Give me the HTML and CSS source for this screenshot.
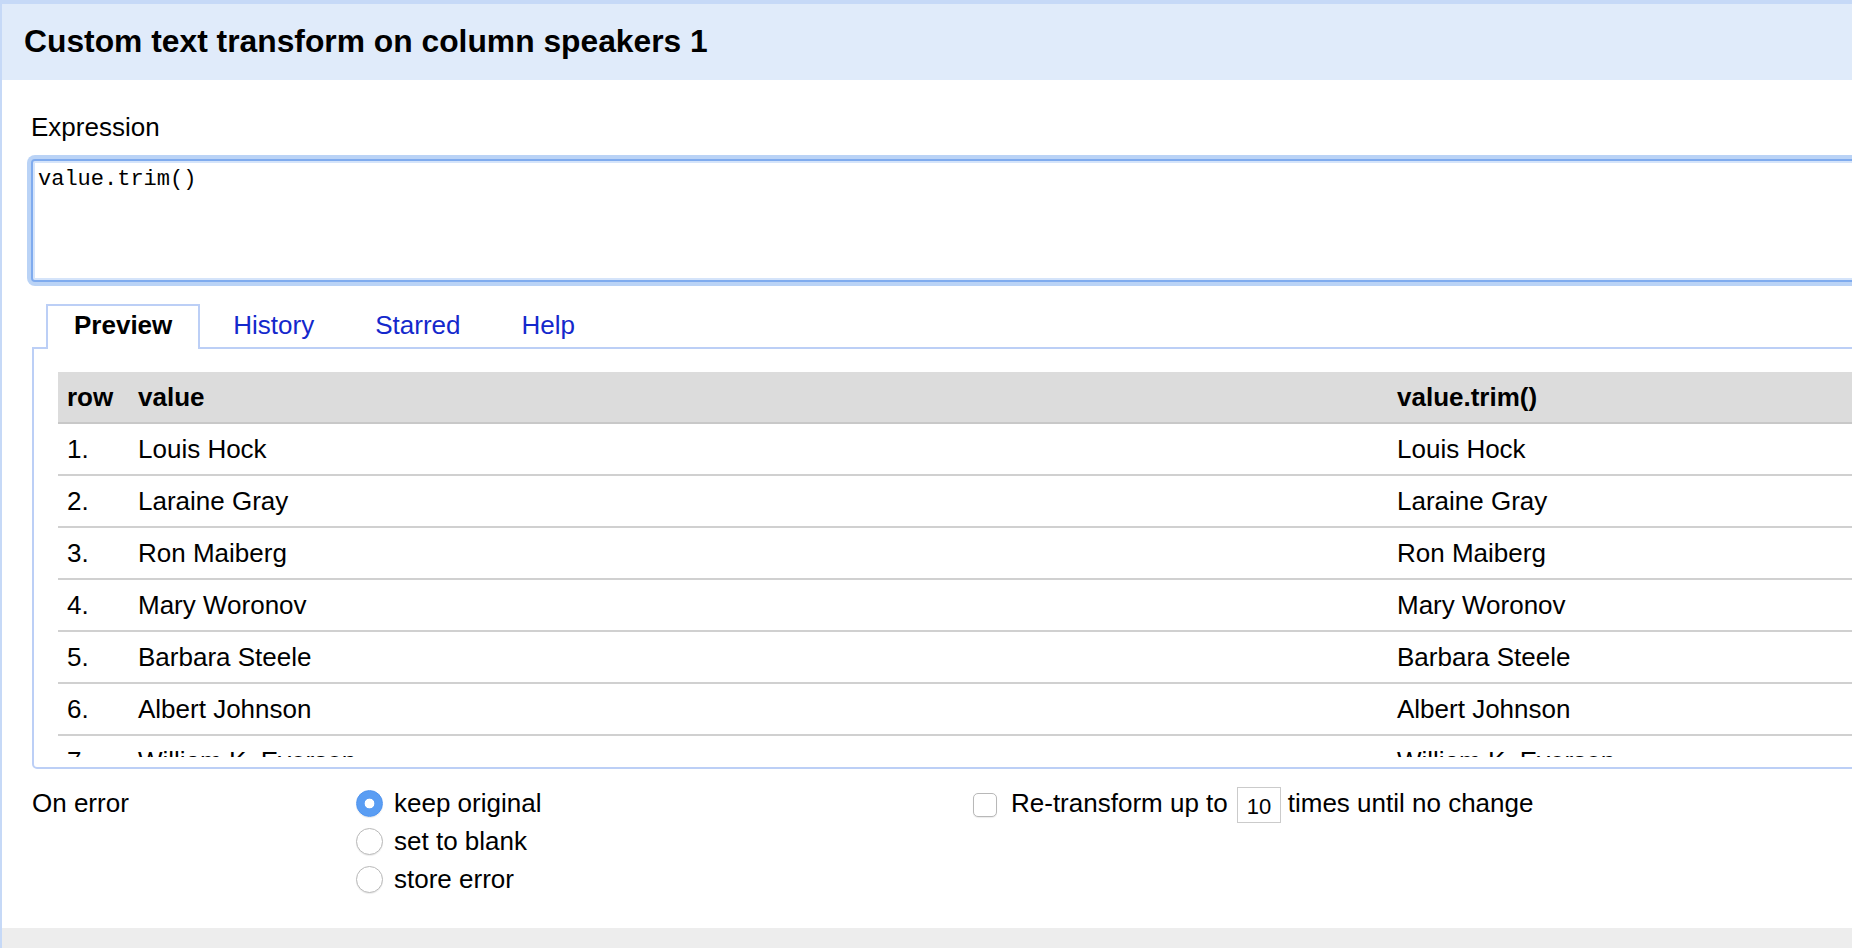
FILE: index.html
```html
<!DOCTYPE html>
<html lang="en">
<head>
<meta charset="utf-8">
<title>Custom text transform</title>
<link rel="stylesheet" href="styles.css">
</head>
<body>
<div class="dialog">
  <div class="dialog-header">Custom text transform on column speakers 1</div>
  <div class="dialog-body">
    <div class="field-label">Expression</div>
    <textarea class="expression" spellcheck="false">value.trim()</textarea>
    <div class="tabs">
      <div class="tab tab-active">Preview</div>
      <a class="tab" href="#">History</a>
      <a class="tab" href="#">Starred</a>
      <a class="tab" href="#">Help</a>
    </div>
    <div class="tab-panel">
      <div class="preview-scroll">
        <table class="preview-table">
          <colgroup>
            <col class="c-row">
            <col class="c-value">
            <col class="c-result">
          </colgroup>
          <thead>
            <tr><th>row</th><th>value</th><th>value.trim()</th></tr>
          </thead>
          <tbody>
            <tr><td>1.</td><td>Louis Hock</td><td>Louis Hock</td></tr>
            <tr><td>2.</td><td>Laraine Gray</td><td>Laraine Gray</td></tr>
            <tr><td>3.</td><td>Ron Maiberg</td><td>Ron Maiberg</td></tr>
            <tr><td>4.</td><td>Mary Woronov</td><td>Mary Woronov</td></tr>
            <tr><td>5.</td><td>Barbara Steele</td><td>Barbara Steele</td></tr>
            <tr><td>6.</td><td>Albert Johnson</td><td>Albert Johnson</td></tr>
            <tr><td>7.</td><td>William K. Everson</td><td>William K. Everson</td></tr>
          </tbody>
        </table>
      </div>
    </div>
    <div class="options">
      <div class="opt-label">On error</div>
      <div class="opt-radios">
        <label class="opt-row"><input class="radio" type="radio" name="onerror" checked><span>keep original</span></label>
        <label class="opt-row"><input class="radio" type="radio" name="onerror"><span>set to blank</span></label>
        <label class="opt-row"><input class="radio" type="radio" name="onerror"><span>store error</span></label>
      </div>
      <div class="opt-repeat">
        <div class="opt-row">
          <input class="checkbox" type="checkbox">
          <span>Re-transform up to</span>
          <input class="repeat-count" type="text" value="10">
          <span>times until no change</span>
        </div>
      </div>
    </div>
  </div>
  <div class="dialog-footer"></div>
</div>
</body>
</html>
```
FILE: styles.css
```css
html, body {
  margin: 0;
  padding: 0;
  overflow: hidden;
  background: #ffffff;
}

body {
  font-family: "Liberation Sans", Arial, Helvetica, sans-serif;
  font-size: 26px;
  color: #000000;
}

.dialog {
  width: 2000px;
  border-top: 4px solid #c6d9f7;
  border-left: 2px solid #c6d9f7;
}

.dialog-header {
  background: #e0ebfa;
  padding: 19px 22px 21px;
  font-size: 31.8px;
  font-weight: bold;
  line-height: 36px;
}

.dialog-body {
  padding: 32px 0 30px 29px;
}

.field-label {
  line-height: 30px;
}

.expression {
  display: block;
  box-sizing: border-box;
  margin: 17px 0 0;
  width: 1900px;
  height: 123px;
  padding: 6px 5px 4px;
  border: 2px solid #7fabee;
  border-radius: 4px;
  box-shadow: 0 0 0 4px #bad3f6, inset 0 0 0 2px #d5e4fa;
  font-family: "Liberation Mono", "Courier New", monospace;
  font-size: 22px;
  line-height: 26px;
  color: #000000;
  resize: none;
  outline: none;
}

.tabs {
  display: flex;
  height: 43px;
  margin: 22px 0 0 15px;
}

.tab {
  position: relative;
  z-index: 1;
  box-sizing: border-box;
  height: 45px;
  padding: 4px 26px 0;
  margin-right: 5px;
  border: 2px solid transparent;
  border-bottom: 0;
  line-height: 30px;
  color: #1428cc;
  text-decoration: none;
}

.tab-active {
  border-color: #bccff6;
  border-bottom: 0;
  background: #ffffff;
  color: #000000;
  font-weight: bold;
}

.tab-panel {
  margin-left: 1px;
  border: 2px solid #bccff6;
  border-radius: 0 0 5px 5px;
  padding: 23px 0 10px 24px;
}

.preview-scroll {
  height: 385px;
  overflow: hidden;
}

.preview-table {
  border-collapse: separate;
  border-spacing: 0;
  table-layout: fixed;
  width: 1900px;
}

.c-row { width: 71px; }
.c-value { width: 1259px; }

.preview-table th,
.preview-table td {
  padding: 10px 9px;
  line-height: 30px;
  text-align: left;
  white-space: nowrap;
  overflow: hidden;
}

.preview-table th {
  background: #dcdcdc;
  font-weight: bold;
  border-bottom: 2px solid #c8c8c8;
}

.preview-table td {
  border-bottom: 2px solid #d0d0d0;
}

.options {
  display: grid;
  grid-template-columns: 325px 617px auto;
  margin-top: 15px;
}

.opt-label {
  margin-left: 1px;
  line-height: 38px;
}

.opt-row {
  display: flex;
  align-items: center;
  height: 38px;
  line-height: 38px;
  white-space: nowrap;
}

.radio {
  appearance: none;
  -webkit-appearance: none;
  box-sizing: border-box;
  width: 27px;
  height: 27px;
  margin: 0 11px 0 0;
  border: 1px solid #b9b9b9;
  border-radius: 50%;
  background: #ffffff;
  box-shadow: 0 1px 1px rgba(0, 0, 0, 0.08);
}

.radio:checked {
  border-color: #4f93ee;
  background: radial-gradient(circle, #ffffff 0 4.5px, #5a9df3 5.2px);
}

.checkbox {
  appearance: none;
  -webkit-appearance: none;
  box-sizing: border-box;
  width: 24px;
  height: 24px;
  margin: 3px 14px 0 0;
  border: 1px solid #b8b8b8;
  border-radius: 5px;
  background: #ffffff;
  box-shadow: 0 1px 1px rgba(0, 0, 0, 0.08);
}

.repeat-count {
  box-sizing: border-box;
  width: 44px;
  height: 36px;
  margin: 4px 7px 0 9px;
  padding: 4px 0 0 9px;
  border: 1px solid #cbcbcb;
  border-radius: 0;
  font-family: "Liberation Sans", Arial, Helvetica, sans-serif;
  font-size: 22px;
  color: #000000;
  outline: none;
}

.dialog-footer {
  height: 60px;
  background: #ededed;
}
```
